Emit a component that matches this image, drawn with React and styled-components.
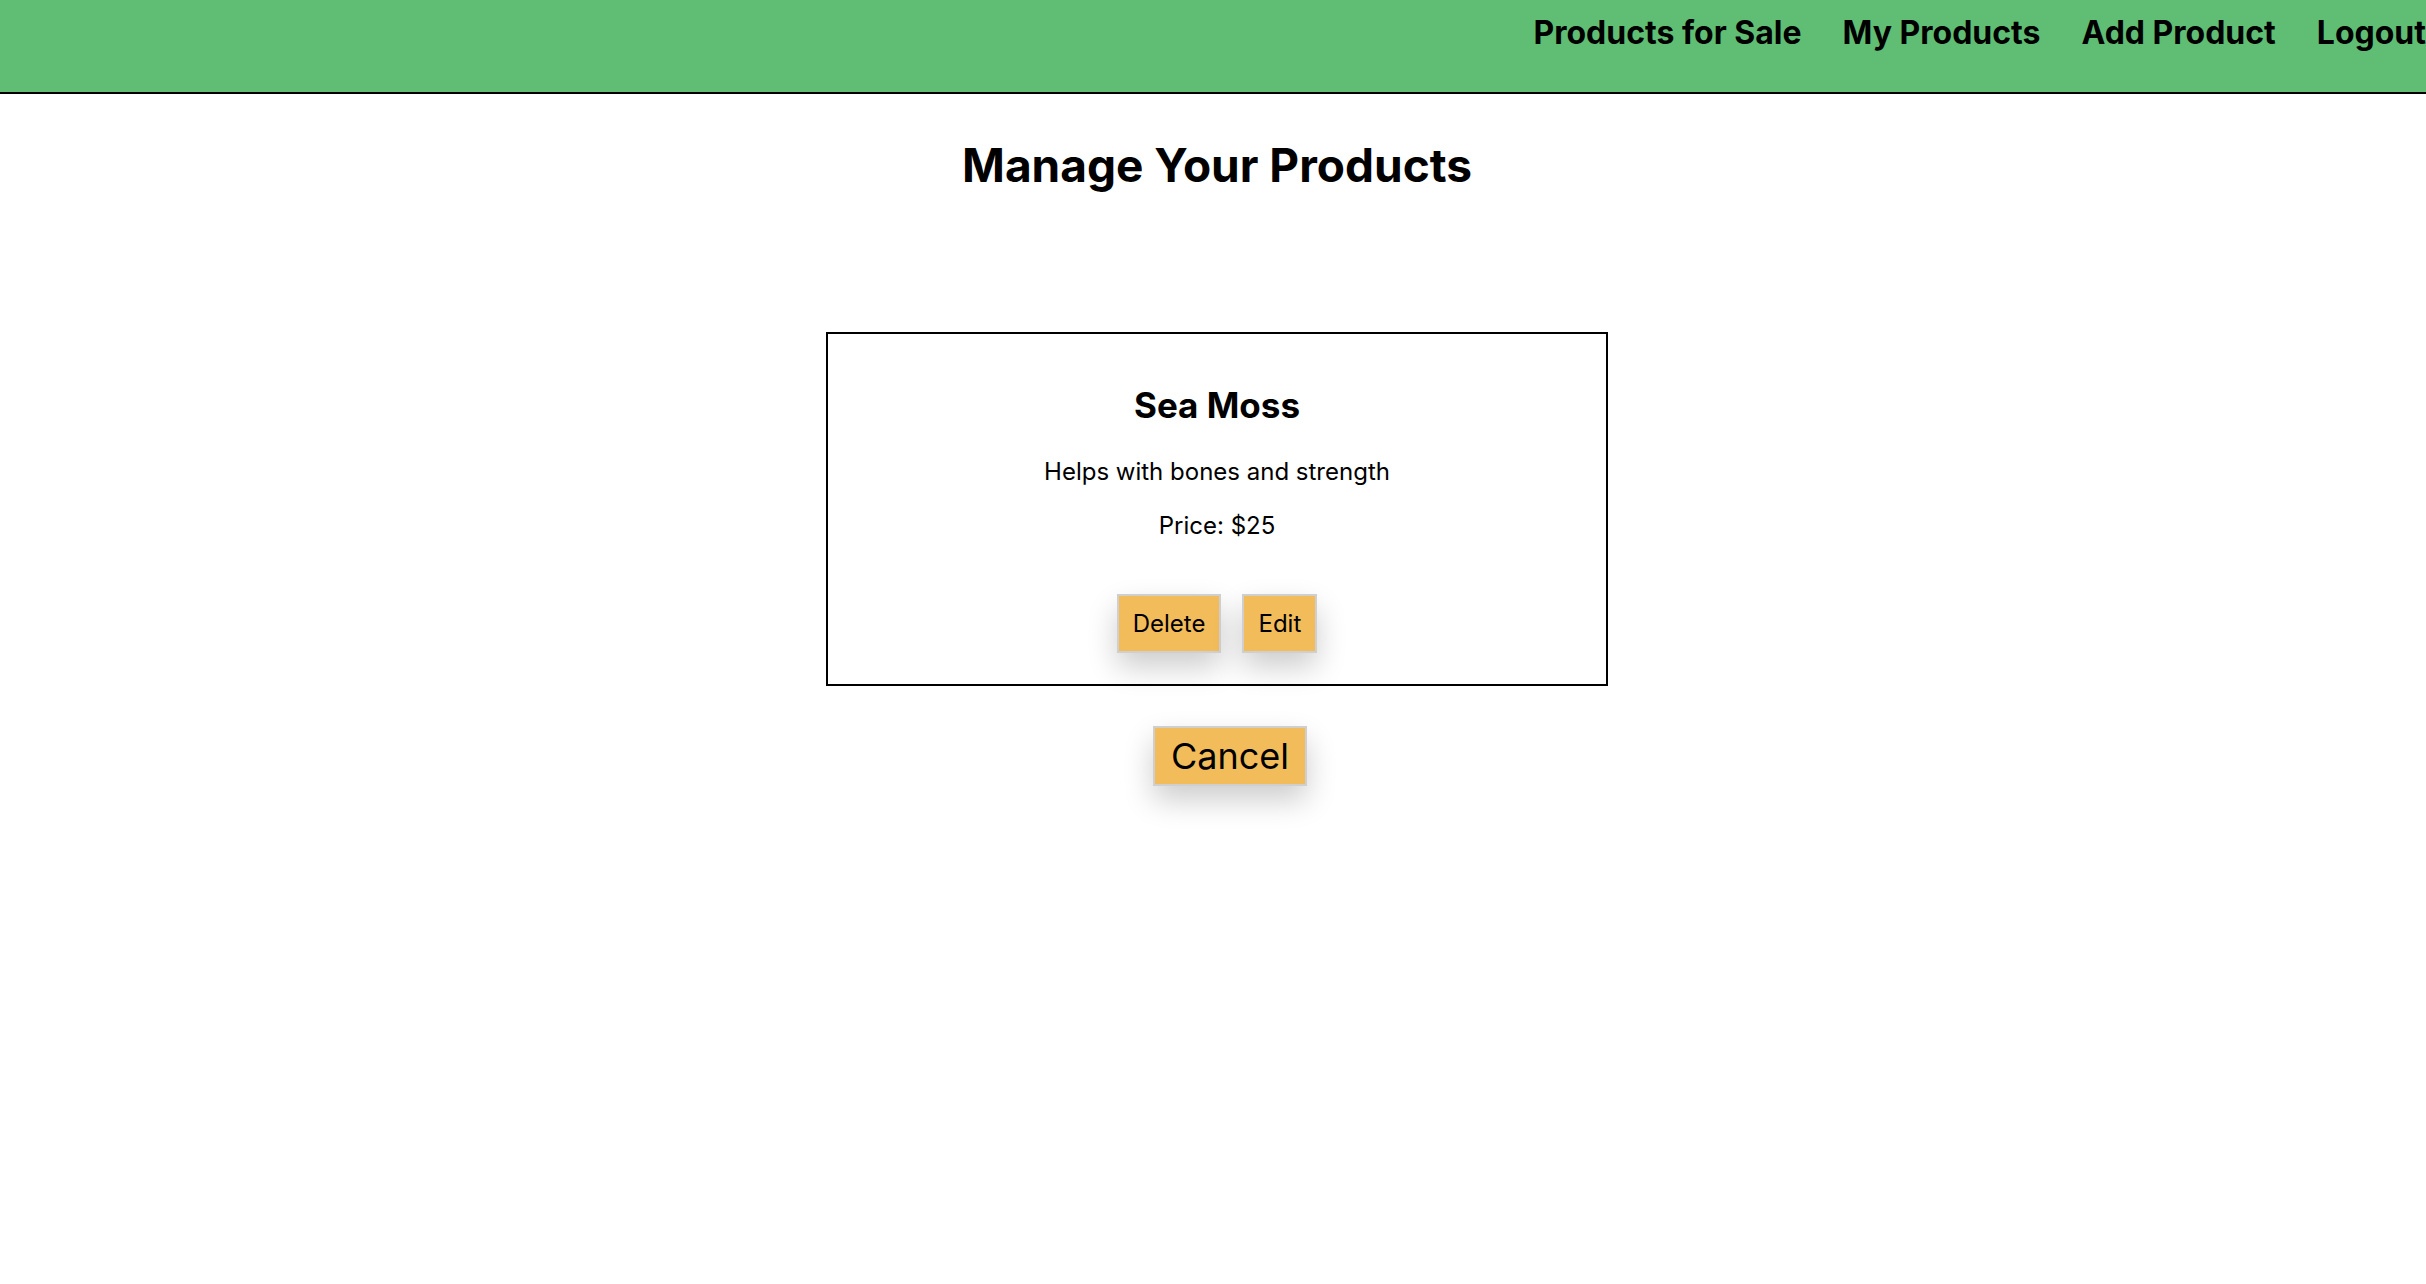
import React from "react";
import styled, { createGlobalStyle } from "styled-components";

const GlobalStyle = createGlobalStyle`
	body {
		margin: 0;
		background: #fff;
		font-family: Inter, "Noto Sans", Arial, sans-serif;
		color: #000;
	}
`;

const links = ["Products for Sale", "My Products", "Add Product", "Logout"];

const App = () => {
	return (
		<>
			<GlobalStyle />
			<Header>
				{links.map((l) => (
					<NavLink href='#' key={l}>
						{l}
					</NavLink>
				))}
			</Header>

			<Main>
				<Title>Manage Your Products</Title>

				<Card>
					<ProductName>Sea Moss</ProductName>
					<Info>Helps with bones and strength</Info>
					<Info gap='25px'>Price: $25</Info>
					<ButtonRow>
						<ActionButton>Delete</ActionButton>
						<ActionButton>Edit</ActionButton>
					</ButtonRow>
				</Card>

				<CancelButton>Cancel</CancelButton>
			</Main>
		</>
	);
};

export default App;

const Header = styled.header`
	height: 94px;
	box-sizing: border-box;
	background-color: #5fbe73;
	border-bottom: 2px solid #000;
	display: flex;
	justify-content: flex-end;
	align-items: flex-start;
	gap: 41px;
	padding: 13px 0 0 0;
	overflow: hidden;
`;

const NavLink = styled.a`
	font-size: 32px;
	font-weight: 700;
	color: #000;
	text-decoration: none;
	white-space: nowrap;
`;

const Main = styled.main`
	display: flex;
	flex-direction: column;
	align-items: center;
	padding: 0 0 60px 8px;
`;

const Title = styled.h1`
	margin: 43px 0 0;
	font-size: 46px;
	font-weight: 700;
`;

const Card = styled.div`
	margin-top: 139px;
	width: 782px;
	box-sizing: border-box;
	border: 2px solid #000;
	padding: 50px 0 31px;
	display: flex;
	flex-direction: column;
	align-items: center;
`;

const ProductName = styled.h2`
	margin: 0;
	font-size: 35px;
	font-weight: 700;
`;

const Info = styled.p`
	margin: ${({ gap }) => gap || "31px"} 0 0;
	font-size: 24px;
`;

const ButtonRow = styled.div`
	margin-top: 54px;
	display: flex;
	gap: 21px;
`;

const ActionButton = styled.button`
	font-family: inherit;
	font-size: 24px;
	color: #000;
	background-color: #f2bc5b;
	border: 2px solid #cfcfcf;
	padding: 13px 14px;
	cursor: pointer;
	box-shadow: 0 14px 30px rgba(0, 0, 0, 0.2);
`;

const CancelButton = styled(ActionButton)`
	margin: 40px 0 0 26px;
	font-size: 36px;
	padding: 6px 16px;
`;
